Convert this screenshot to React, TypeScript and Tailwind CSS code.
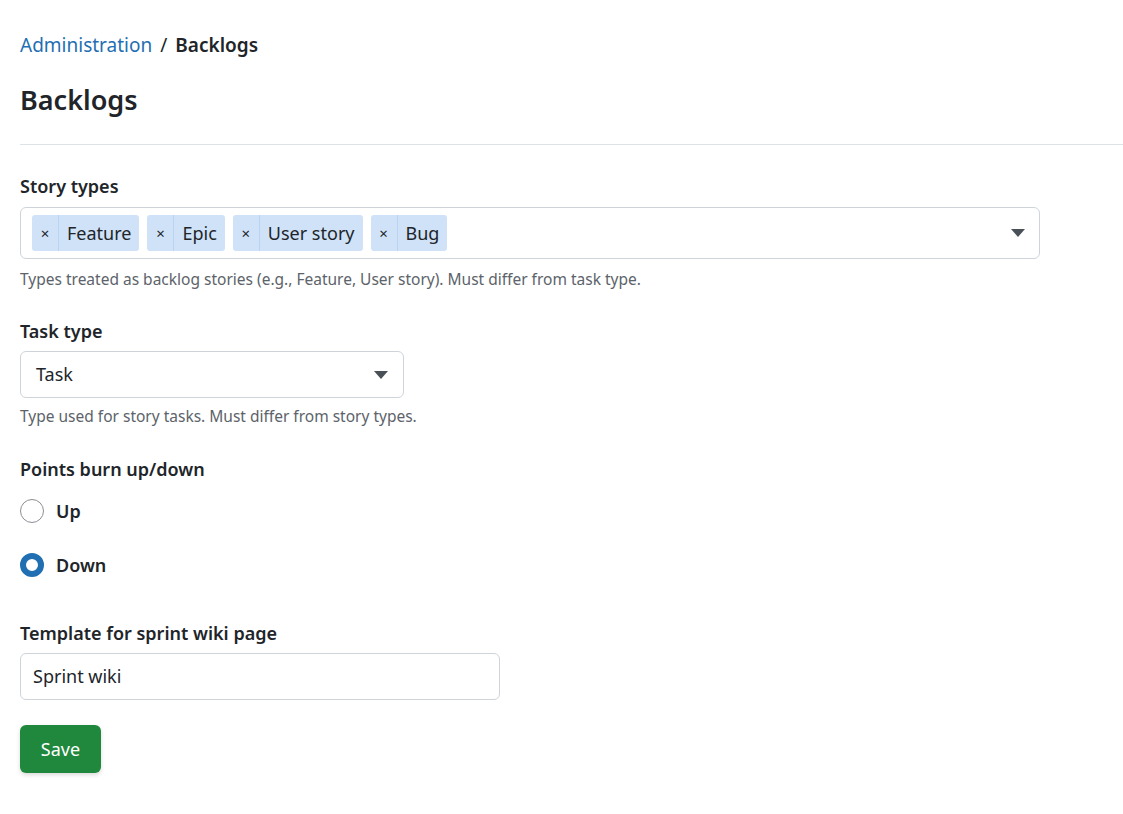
import React from "react";

const Caret = () => (
  <svg width="14" height="8" viewBox="0 0 14 8"><path d="M0 0h14L7 8z" fill="#495057" /></svg>
);

const Tag = ({ t }: { t: string }) => (
  <div className="flex h-[36px] items-stretch rounded-[3px] bg-[#cfe2f8] text-[18px] text-[#212529]">
    <span className="flex w-[27px] items-center justify-center border-r border-[#b9d3f1] text-[15px]">×</span>
    <span className="flex items-center px-[8px]">{t}</span>
  </div>
);

export default function App() {
  return (
    <div className="min-h-[814px] bg-white pl-[20px] text-[#212529]" style={{ fontFamily: '"Noto Sans", "Open Sans", sans-serif' }}>
      <div className="pt-[30px] text-[19px] leading-[30px]">
        <span className="text-[#1f6fb2]">Administration</span>
        <span className="mx-[8px]">/</span>
        <span className="font-semibold">Backlogs</span>
      </div>
      <h1 className="mt-[22px] text-[27px] font-semibold leading-[36px]">Backlogs</h1>
      <div className="mt-[26px] h-px bg-[#dee2e6]" />
      <div className="mt-[28px] text-[18px] font-semibold leading-[26px]">Story types</div>
      <div className="mt-[8px] flex h-[52px] w-[1020px] items-center justify-between rounded-[6px] border border-[#ced4da] pl-[11px] pr-[14px]">
        <div className="flex gap-[8px]">
          {["Feature", "Epic", "User story", "Bug"].map((t) => <Tag key={t} t={t} />)}
        </div>
        <Caret />
      </div>
      <div className="mt-[8px] text-[15.5px] leading-[24px] text-[#5c636a]">Types treated as backlog stories (e.g., Feature, User story). Must differ from task type.</div>
      <div className="mt-[27px] text-[18px] font-semibold leading-[26px]">Task type</div>
      <div className="mt-[7px] flex h-[47px] w-[384px] items-center justify-between rounded-[6px] border border-[#ced4da] pl-[15px] pr-[15px] text-[18px]">
        <span>Task</span>
        <Caret />
      </div>
      <div className="mt-[6px] text-[15.5px] leading-[24px] text-[#5c636a]">Type used for story tasks. Must differ from story types.</div>
      <div className="mt-[28px] text-[18px] font-semibold leading-[26px]">Points burn up/down</div>
      <div className="mt-[16px] flex items-center gap-[12px] text-[18px] font-semibold leading-[26px]">
        <span className="h-[24px] w-[24px] rounded-full border border-[#8a8f94]" />
        Up
      </div>
      <div className="mt-[28px] flex items-center gap-[12px] text-[18px] font-semibold leading-[26px]">
        <span className="h-[24px] w-[24px] rounded-full border-[6px] border-[#1f6fb2] bg-white" />
        Down
      </div>
      <div className="mt-[42px] text-[18px] font-semibold leading-[26px]">Template for sprint wiki page</div>
      <div className="mt-[7px] flex h-[47px] w-[480px] items-center rounded-[6px] border border-[#ced4da] px-[12px] text-[18px]">Sprint wiki</div>
      <button className="mt-[25px] h-[48px] w-[81px] rounded-[6px] bg-[#1f883d] text-[18px] text-white shadow-[0_2px_4px_rgba(0,0,0,0.15)]">Save</button>
    </div>
  );
}
